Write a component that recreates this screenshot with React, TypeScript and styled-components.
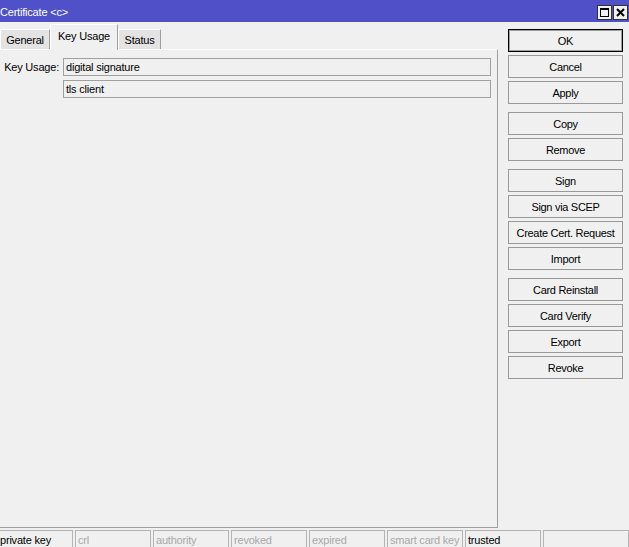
import styled, { createGlobalStyle } from 'styled-components';

const GlobalStyle = createGlobalStyle`
  html, body {
    margin: 0;
    padding: 0;
    background: #f0f0f0;
    overflow: hidden;
  }
  body {
    font-family: "Liberation Sans", Arial, sans-serif;
    font-size: 11px;
    color: #000;
  }
`;

const Window = styled.div`
  width: 629px;
  height: 547px;
  display: flex;
  flex-direction: column;
  background: #f0f0f0;
  overflow: hidden;
`;

const TitleBar = styled.div`
  flex: none;
  height: 22px;
  background: #5050c8;
  color: #fff;
  display: flex;
  align-items: flex-start;
  justify-content: space-between;
`;

const Title = styled.span`
  font-size: 11px;
  line-height: 24px;
  letter-spacing: -0.2px;
`;

const TitleButtons = styled.div`
  display: flex;
  gap: 1px;
  margin: 5px 1px 0 0;
`;

const TitleButton = styled.div`
  width: 15px;
  height: 15px;
  box-sizing: border-box;
  border: 1px solid #333;
  background: #f0f0f0;
  display: flex;
  align-items: center;
  justify-content: center;
`;

const Main = styled.div`
  flex: none;
  height: 506px;
  display: flex;
`;

const LeftPane = styled.div`
  width: 498px;
  display: flex;
  flex-direction: column;
`;

const TabRow = styled.div`
  height: 27px;
  display: flex;
  align-items: flex-end;
`;

const Tab = styled.div<{ $active?: boolean; $width: number }>`
  position: relative;
  z-index: ${({ $active }) => ($active ? 1 : 0)};
  width: ${({ $width }) => $width}px;
  height: ${({ $active }) => ($active ? 26 : 20)}px;
  margin-bottom: ${({ $active }) => ($active ? -1 : 0)}px;
  box-sizing: border-box;
  background: ${({ $active }) => ($active ? '#f0f0f0' : '#e3e3e3')};
  border-top: 1px solid #fff;
  border-left: 1px solid #fff;
  border-right: 1px solid #a0a0a0;
  display: flex;
  align-items: center;
  justify-content: center;
  padding-bottom: ${({ $active }) => ($active ? 4 : 0)}px;
  font-size: 11px;
  letter-spacing: -0.2px;
`;

const Panel = styled.div`
  flex: 1;
  box-sizing: border-box;
  border-top: 1px solid #fff;
  border-right: 1px solid #a0a0a0;
  border-bottom: 1px solid #a0a0a0;
  padding-top: 8px;
`;

const FieldGrid = styled.div`
  display: grid;
  grid-template-columns: 63px 428px;
  row-gap: 4px;
`;

const Label = styled.div`
  justify-self: end;
  padding-right: 4px;
  line-height: 18px;
  letter-spacing: -0.2px;
`;

const Field = styled.div`
  grid-column: 2;
  height: 18px;
  box-sizing: border-box;
  border: 1px solid #a0a0a0;
  padding-left: 2px;
  line-height: 16px;
  letter-spacing: -0.2px;
`;

const ButtonColumn = styled.div`
  flex: 1;
  padding: 7px 0 0 10px;
  display: flex;
  flex-direction: column;
  gap: 8px;
`;

const ButtonGroup = styled.div`
  display: flex;
  flex-direction: column;
  gap: 3px;
`;

const Button = styled.div<{ $default?: boolean }>`
  width: 115px;
  height: 23px;
  box-sizing: border-box;
  border: 1px solid ${({ $default }) => ($default ? '#000' : '#999')};
  box-shadow: ${({ $default }) => ($default ? 'inset 0 0 0 1px #a0a0a0' : 'none')};
  display: flex;
  align-items: center;
  justify-content: center;
  font-size: 11px;
  letter-spacing: -0.3px;
`;

const StatusBar = styled.div`
  flex: none;
  margin-top: 2px;
  height: 17px;
  display: flex;
  gap: 2px;
`;

const StatusCell = styled.div<{ $on?: boolean; $first?: boolean; $fill?: boolean }>`
  box-sizing: border-box;
  width: ${({ $first }) => ($first ? 73 : 76)}px;
  flex: ${({ $fill }) => ($fill ? 1 : 'none')};
  border: 1px solid #b4b4b4;
  border-left: ${({ $first }) => ($first ? 'none' : '1px solid #b4b4b4')};
  border-bottom: none;
  padding-left: ${({ $first }) => ($first ? 0 : 2)}px;
  line-height: 18px;
  font-size: 11px;
  letter-spacing: -0.2px;
  color: ${({ $on }) => ($on ? '#000' : '#a8a8a8')};
  white-space: nowrap;
  overflow: hidden;
`;

const buttonGroups = [
  ['OK', 'Cancel', 'Apply'],
  ['Copy', 'Remove'],
  ['Sign', 'Sign via SCEP', 'Create Cert. Request', 'Import'],
  ['Card Reinstall', 'Card Verify', 'Export', 'Revoke'],
];

const flags = [
  { name: 'private key', on: true },
  { name: 'crl', on: false },
  { name: 'authority', on: false },
  { name: 'revoked', on: false },
  { name: 'expired', on: false },
  { name: 'smart card key', on: false },
  { name: 'trusted', on: true },
];

export default function App() {
  return (
    <Window>
      <GlobalStyle />
      <TitleBar>
        <Title>Certificate &lt;c&gt;</Title>
        <TitleButtons>
          <TitleButton>
            <svg width="9" height="9" viewBox="0 0 9 9">
              <rect x="0.5" y="0.5" width="8" height="8" fill="none" stroke="#000" />
              <rect x="0" y="0" width="9" height="2" fill="#000" />
            </svg>
          </TitleButton>
          <TitleButton>
            <svg width="9" height="9" viewBox="0 0 9 9">
              <path d="M1 1 L8 8 M8 1 L1 8" stroke="#000" strokeWidth="2" />
            </svg>
          </TitleButton>
        </TitleButtons>
      </TitleBar>
      <Main>
        <LeftPane>
          <TabRow>
            <Tab $width={50}>General</Tab>
            <Tab $width={68} $active>Key Usage</Tab>
            <Tab $width={43}>Status</Tab>
          </TabRow>
          <Panel>
            <FieldGrid>
              <Label>Key Usage:</Label>
              <Field>digital signature</Field>
              <Field>tls client</Field>
            </FieldGrid>
          </Panel>
        </LeftPane>
        <ButtonColumn>
          {buttonGroups.map((group, gi) => (
            <ButtonGroup key={gi}>
              {group.map((label) => (
                <Button key={label} $default={label === 'OK'}>
                  {label}
                </Button>
              ))}
            </ButtonGroup>
          ))}
        </ButtonColumn>
      </Main>
      <StatusBar>
        {flags.map((f, i) => (
          <StatusCell key={f.name} $on={f.on} $first={i === 0}>
            {f.name}
          </StatusCell>
        ))}
        <StatusCell $fill />
      </StatusBar>
    </Window>
  );
}
